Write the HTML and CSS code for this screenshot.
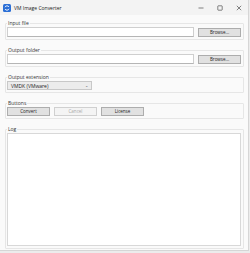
FILE: index.html
```html
<!DOCTYPE html>
<html>
<head>
<meta charset="utf-8">
<link rel="stylesheet" href="styles.css">
</head>
<body>
<div class="window">
  <div class="titlebar">
    <svg class="appicon" width="8" height="8" viewBox="0 0 8 8">
      <rect x="0" y="0" width="8" height="8" rx="1.5" fill="#2b6fd6"/>
      <path d="M2 3.2 A2.2 2.2 0 0 1 6 3" stroke="#fff" stroke-width="0.9" fill="none"/>
      <path d="M6 4.8 A2.2 2.2 0 0 1 2 5" stroke="#fff" stroke-width="0.9" fill="none"/>
    </svg>
    <span class="title">VM Image Converter</span>
    <div class="controls">
      <span class="ctl"><svg width="6" height="6" viewBox="0 0 6 6"><path d="M0.5 3h5" stroke="#333" stroke-width="0.6"/></svg></span>
      <span class="ctl"><svg width="6" height="6" viewBox="0 0 6 6"><rect x="0.8" y="0.8" width="4.4" height="4.4" rx="0.6" stroke="#333" stroke-width="0.6" fill="none"/></svg></span>
      <span class="ctl"><svg width="6" height="6" viewBox="0 0 6 6"><path d="M0.8 0.8l4.4 4.4M5.2 0.8l-4.4 4.4" stroke="#333" stroke-width="0.6"/></svg></span>
    </div>
  </div>
  <div class="content">
    <fieldset class="group">
      <legend>Input file</legend>
      <div class="row">
        <div class="textbox"></div>
        <button class="btn browse">Browse...</button>
      </div>
    </fieldset>
    <fieldset class="group">
      <legend>Output folder</legend>
      <div class="row">
        <div class="textbox"></div>
        <button class="btn browse">Browse...</button>
      </div>
    </fieldset>
    <fieldset class="group">
      <legend>Output extension</legend>
      <div class="row">
        <div class="combo"><span>VMDK (VMware)</span><span class="arrow">⌄</span></div>
      </div>
    </fieldset>
    <fieldset class="group">
      <legend>Buttons</legend>
      <div class="row buttons">
        <button class="btn">Convert</button>
        <button class="btn disabled">Cancel</button>
        <button class="btn">License</button>
      </div>
    </fieldset>
    <fieldset class="group log">
      <legend>Log</legend>
      <div class="logbox"></div>
    </fieldset>
  </div>
</div>
</body>
</html>
```
FILE: styles.css
```css
html, body {
  margin: 0;
  padding: 0;
  background: #ececec;
  width: 250px;
  height: 253px;
  overflow: hidden;
  font-family: "Open Sans", "Noto Sans", sans-serif;
  font-size: 5px;
  color: #222;
}
.window {
  width: 249px;
  height: 251px;
  background: #fafafa;
  border-right: 1px solid #d6d6d6;
  border-bottom: 1px solid #d6d6d6;
  box-sizing: border-box;
  display: flex;
  flex-direction: column;
}
.titlebar {
  height: 15px;
  background: #f3f3f3;
  display: flex;
  align-items: center;
  padding-left: 3px;
  gap: 3px;
  flex-shrink: 0;
}
.appicon { display: block; }
.title { font-size: 5px; color: #222; }
.controls {
  margin-left: auto;
  display: flex;
  align-items: center;
}
.ctl {
  width: 19px;
  height: 15px;
  display: flex;
  align-items: center;
  justify-content: center;
}
.content {
  flex: 1;
  display: flex;
  flex-direction: column;
  padding: 6px 4px 1px 5px;
  gap: 8px;
}
.group {
  margin: 0;
  border: 1px solid #e6e6e6;
  border-radius: 1px;
  padding: 1px 2px 2px 1px;
}
.group legend {
  padding: 0 1px 0 1px;
  margin-left: 0;
  font-size: 5px;
  line-height: 5px;
  color: #333;
}
.row {
  display: flex;
  align-items: center;
  gap: 4px;
}
.textbox {
  flex: 1;
  height: 8px;
  background: #fff;
  border: 1px solid #cfcfcf;
  border-bottom-color: #b5b5b5;
}
.btn {
  font-family: inherit;
  font-size: 4.5px;
  height: 9px;
  padding: 0;
  border: 1px solid #adadad;
  background: #e1e1e1;
  color: #222;
  line-height: 7px;
}
.browse { width: 43px; }
.buttons { gap: 4px; }
.buttons .btn { width: 43px; }
.btn.disabled {
  background: #f4f4f4;
  border-color: #d0d0d0;
  color: #a8a8a8;
}
.combo {
  width: 85px;
  height: 9px;
  box-sizing: border-box;
  background: #ececec;
  border: 1px solid #c8c8c8;
  display: flex;
  align-items: center;
  justify-content: space-between;
  padding: 0 3px;
  font-size: 5px;
}
.arrow { font-size: 4px; color: #555; line-height: 4px; }
.log { flex: 1; display: flex; flex-direction: column; }
.logbox {
  flex: 1;
  background: #fff;
  border: 1px solid #d8d8d8;
}
```
